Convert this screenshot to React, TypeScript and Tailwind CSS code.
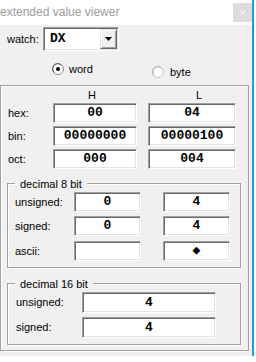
import React from "react";

const sans = { fontFamily: '"Liberation Sans", Arial, sans-serif' };
const mono = { fontFamily: '"Liberation Mono", "DejaVu Sans Mono", monospace' };

function Field({ className, value }: { className: string; value?: string }) {
  return (
    <div
      className={`flex items-center justify-center bg-white border border-t-[#a0a0a0] border-l-[#a0a0a0] border-b-white border-r-white shadow-[inset_1px_1px_0_#696969,inset_-1px_-1px_0_#e3e3e3] text-[13px] font-bold text-black ${className}`}
      style={mono}
    >
      {value}
    </div>
  );
}

function Radio({ checked }: { checked: boolean }) {
  return (
    <svg width="12" height="12" viewBox="0 0 12 12">
      <circle cx="6" cy="6" r="5.5" fill="#fff" stroke={checked ? "#8a8a8a" : "#c4c4c4"} />
      <path d="M2.2 9.3A4.5 4.5 0 0 1 9.3 2.2" fill="none" stroke={checked ? "#5a5a5a" : "#a8a8a8"} />
      {checked && <circle cx="6" cy="6" r="2" fill="#000" />}
    </svg>
  );
}

function Group({ title, className, children }: { title: string; className: string; children: React.ReactNode }) {
  return (
    <div className={`relative border border-[#a0a0a0] shadow-[1px_1px_0_#fff,inset_1px_1px_0_#fff] ${className}`}>
      <span className="absolute top-[-6px] left-[7px] px-[5px] bg-[#f0f0f0] leading-[13px]">{title}</span>
      {children}
    </div>
  );
}

export default function App() {
  return (
    <div className="w-[256px] h-[362px] bg-white overflow-hidden text-[11px] text-black" style={sans}>
      <div className="w-[254px] h-[356px] border-r-2 border-[#1ba1e2] flex flex-col">
        {/* title bar */}
        <div className="h-[25px] bg-white flex justify-between">
          <span className="mt-[5px] text-[12px] leading-[15px] text-[#9c9c9c]">extended value viewer</span>
          <div className="mt-[3px] w-[19px] h-[19px] bg-[#dcdcdc] flex items-center justify-center text-[13px] leading-none text-[#f4f4f4]">
            ×
          </div>
        </div>

        <div className="flex-1 bg-[#f0f0f0] flex flex-col">
          {/* watch */}
          <div className="mt-[2px] h-[24px] flex items-center">
            <span className="pl-[7px] w-[43px]">watch:</span>
            <div className="w-[76px] h-[24px] flex items-center bg-white border border-t-[#a0a0a0] border-l-[#a0a0a0] border-b-white border-r-white shadow-[inset_1px_1px_0_#696969,inset_-1px_-1px_0_#e3e3e3]">
              <span className="flex-1 pl-[6px] text-[13px] font-bold" style={mono}>DX</span>
              <div className="mr-[1px] w-[17px] h-[20px] bg-[#f0f0f0] border border-t-[#e3e3e3] border-l-[#e3e3e3] border-b-[#696969] border-r-[#696969] shadow-[inset_1px_1px_0_#fff,inset_-1px_-1px_0_#a0a0a0] flex items-center justify-center">
                <svg width="7" height="4" viewBox="0 0 7 4">
                  <path d="M0 0h7L3.5 4z" fill="#000" />
                </svg>
              </div>
            </div>
          </div>

          {/* radios */}
          <div className="h-[34px] flex items-start">
            <div className="ml-[52px] w-[100px] mt-[10px] flex items-center gap-[5px]">
              <Radio checked />
              <span>word</span>
            </div>
            <div className="mt-[13px] flex items-center gap-[6px]">
              <Radio checked={false} />
              <span>byte</span>
            </div>
          </div>

          {/* main group */}
          <div className="w-[249px] h-[266px] border border-[#a0a0a0] shadow-[1px_1px_0_#fff,inset_1px_1px_0_#fff] flex flex-col">
            <div className="mt-[1px] h-[16px] flex items-center leading-[13px]">
              <span className="ml-[85px] w-[12px] text-center">H</span>
              <span className="ml-[96px] w-[10px] text-center">L</span>
            </div>
            {[
              ["hex:", "00", "04"],
              ["bin:", "00000000", "00000100"],
              ["oct:", "000", "004"],
            ].map(([l, h, lo], i) => (
              <div key={l} className={`h-[20px] flex items-center ${i ? "mt-[3px]" : ""}`}>
                <span className="pl-[7px] w-[52px]">{l}</span>
                <Field className="w-[84px] h-[20px]" value={h} />
                <Field className="ml-[11px] w-[88px] h-[20px]" value={lo} />
              </div>
            ))}

            <Group title="decimal 8 bit" className="mt-[14px] ml-[6px] w-[234px] h-[85px] pt-[8px]">
              {[
                ["unsigned:", "0", "4", ""],
                ["signed:", "0", "4", "mt-[4px]"],
                ["ascii:", "", "\u25C6", "mt-[5px]"],
              ].map(([l, h, lo, m]) => (
                <div key={l} className={`h-[20px] flex items-center ${m}`}>
                  <span className="pl-[7px] w-[66px]">{l}</span>
                  <Field className="w-[67px] h-[20px]" value={h} />
                  <Field className="ml-[22px] w-[67px] h-[20px]" value={lo} />
                </div>
              ))}
            </Group>

            <Group title="decimal 16 bit" className="mt-[15px] ml-[6px] w-[234px] h-[62px] pt-[8px]">
              <div className="h-[21px] flex items-center">
                <span className="pl-[8px] w-[74px]">unsigned:</span>
                <Field className="w-[134px] h-[21px]" value="4" />
              </div>
              <div className="mt-[4px] h-[21px] flex items-center">
                <span className="pl-[8px] w-[74px]">signed:</span>
                <Field className="w-[134px] h-[21px]" value="4" />
              </div>
            </Group>
          </div>
        </div>
      </div>
    </div>
  );
}
